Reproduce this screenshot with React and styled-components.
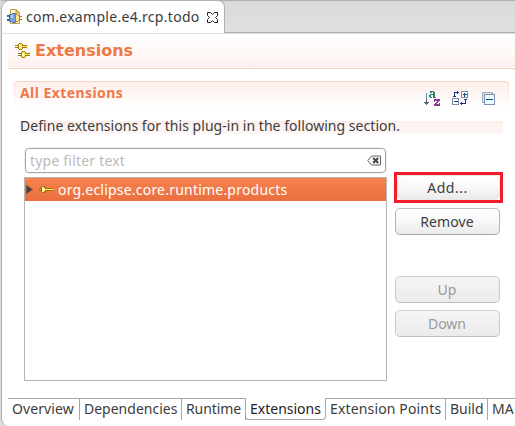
import React from "react";
import styled, { createGlobalStyle, css } from "styled-components";

const Global = createGlobalStyle`
  *{box-sizing:border-box}
  body{margin:0;overflow:hidden;background:#dcdcdc;font-family:"Noto Sans","Open Sans",sans-serif;font-size:14px;color:#3c3c3c}
  svg{display:block;flex:none}
`;

const Window = styled.div`
  width:515px;height:426px;overflow:hidden;display:flex;flex-direction:column;
  padding-left:1px;background:#dcdcdc;
`;
const TabStrip = styled.header`
  height:33px;flex:none;display:flex;border-top:1px solid #b0b0b0;
  border-bottom:1px solid #b0b0b0;background:linear-gradient(#d9d9d9,#e0e0e0);
`;
const FileTab = styled.div`
  width:224px;height:33px;margin-top:-1px;padding:0 6px 0 5px;display:flex;align-items:center;
  background:#fff;border:solid #b0b0b0;border-width:1px 1px 0 1px;border-radius:9px 7px 0 0;
`;
const Label = styled.span`
  display:block;white-space:pre;line-height:20px;
  letter-spacing:${p => p.$track || 0}px;
`;
const FileName = styled(Label)`margin-left:3px;width:181px;`;
const Editor = styled.main`
  flex:1;display:flex;flex-direction:column;background:#fff;
  border-left:1px solid #b0b0b0;border-top:1px solid #e0e0e0;border-radius:0 0 0 8px;
  padding-left:6px;
`;
const FormHead = styled.div`
  height:35px;flex:none;display:flex;align-items:center;padding:0 0 1px 7px;
  background:linear-gradient(#fff,#fef8f6 60%,#fdefeb) 0 0/100% 33px no-repeat;
  border-bottom:1px solid #f8cfbc;
`;
const FormTitle = styled.h1`
  margin:0 0 0 5px;font:bold 16px/20px "DejaVu Sans",sans-serif;color:#f07746;
`;
const Section = styled.section`margin:12px 6px 0 6px;height:314px;flex:none;`;
const SectionHead = styled.div`
  height:26px;display:flex;justify-content:space-between;padding:1px 13px 0 6px;
  border-top:1px solid #f9d3c6;border-radius:4px 4px 0 0;
  background:linear-gradient(#fbd9cf,#fff) 0 0/1px 100% no-repeat,
    linear-gradient(#fbd9cf,#fff) 100% 0/1px 100% no-repeat,
    linear-gradient(#fdefeb,#fff);
`;
const SectionTitle = styled(Label)`font-weight:bold;color:#f07746;`;
const Tools = styled.div`display:flex;gap:11px;padding-top:8px;`;
const Description = styled.p`
  margin:14px 6px 0;height:13px;padding-bottom:3px;background:linear-gradient(#fdf0ec,#fef7f5);
  display:flex;align-items:center;
`;
const Body = styled.div`display:flex;margin:14px 0 0 10px;gap:7px;`;
const ListColumn = styled.div`width:363px;`;
const Filter = styled.div`
  height:25px;border:1px solid #aaa49e;border-radius:4px;box-shadow:0 0 0 1px #f1f0ef;
  margin:0 1px;padding:0 3px 0 4px;display:flex;align-items:center;justify-content:space-between;color:#bcb9b6;
`;
const List = styled.div`
  margin-top:4px;height:204px;border:1px solid #bab5b0;
`;
const Row = styled.div`
  height:23px;display:flex;align-items:center;color:#fff;
  background:linear-gradient(#f5824f,#ea6f3e);padding:0 0 0 1px;
`;
const RowLabel = styled(Label)`margin-left:4px;`;
const RowArrow = styled.svg`margin-right:6px;`;
const Buttons = styled.div`display:flex;flex-direction:column;width:109px;padding-top:24px;`;
const Button = styled.button`
  width:105px;height:27px;margin:${p => p.$top || 0}px 0 0 1px;padding:0 1px 0 0;
  border:1px solid #b3afab;border-color:#c3c0bd #b8b4b0 #aaa5a0;border-radius:5px;
  background:linear-gradient(#fff,#f9f9f9 45%,#ebebeb);font:inherit;color:#3c3c3c;
  letter-spacing:${p => p.$track || 0}px;
  display:flex;align-items:center;justify-content:center;
  ${p => p.disabled && css`color:#999;background:linear-gradient(#f6f5f5,#ecebeb);border-color:#d3d1ce #cbc8c5 #bfbbb7;`}
`;
const Highlight = styled.div`
  width:109px;height:31px;border:3px solid #f41c2b;display:flex;
  ${Button}{margin:0;padding-right:2px;width:103px;height:25px;border-color:#e8e6e4;}
`;
const PageTabs = styled.nav`display:flex;height:23px;margin-top:3px;overflow:hidden;`;
const PageTab = styled.div`
  flex:none;width:${p => p.$w}px;height:22px;padding:0 0 0 ${p => p.$pad || 4}px;
  border-top:1px solid #aaa59f;border-right:1px solid #aaa59f;
  ${p => p.$active && css`
    border-top-color:transparent;border-bottom:1px solid #aaa59f;border-left:1px solid #aaa59f;
    border-radius:0 0 4px 4px;margin-left:-1px;color:#222;
  `}
`;

const Plug = ({ x = 0, y = 0 }) => (
  <g transform={`translate(${x} ${y})`} shapeRendering="crispEdges">
    <path d="M0 2h3v1H0zM0 4h3v1H0zM7 2h5v3H7z" fill="#9c7b08" />
    <path d="M3 1h1V0h3v1h1v5H7v1H4V6H3z" fill="#a27c00" />
    <path d="M4 1h3v5H4zM7 3h5v1H7z" fill="#ffe95c" />
    <path d="M4 2h2v3H4z" fill="#fffbd0" />
  </g>
);
const RowPlug = () => (
  <svg width="15" height="7" viewBox="0 0 15 7" shapeRendering="crispEdges">
    <path d="M0 2h3v1H0zM0 4h3v1H0zM7 2h8v3H7z" fill="#a86f00" />
    <path d="M2 1h1V0h3v1h1v5H6v1H3V6H2z" fill="#a27600" />
    <path d="M3 1h2v5H3zM6 3h9v1H6z" fill="#fff06a" />
    <path d="M4 2h2v3H4z" fill="#fffbd0" />
  </svg>
);
const FileIcon = () => (
  <svg width="16" height="16" viewBox="0 0 16 16">
    <path d="M3.5.5h6l3 3v11h-9z" fill="#fff6d8" stroke="#c69b45" />
    <path d="M9 .5V4h3.5" fill="#e5bd61" stroke="#c69b45" />
    <path d="M0 6h3v2H0zm0 4h3v2H0z" fill="#3765aa" />
    <path d="M2.5 5.5h2l1-1h3v9h-3l-1-1h-2z" fill="#7ba2d8" stroke="#3f69ad" />
    <path d="M4 6h2v3H4z" fill="#b5cdec" />
    <path d="M8.5 5.5h2l2 2v3l-2 2h-2z" fill="#ffe58e" stroke="#a87919" />
    <path d="M12.5 7.5H15m-2.5 3H15" stroke="#a87919" />
  </svg>
);
const CloseIcon = () => (
  <svg width="11" height="11" viewBox="0 0 11 11">
    <path d="M.5.5h3l2 2 2-2h3v3l-2 2 2 2v3h-3l-2-2-2 2h-3v-3l2-2-2-2z" fill="#fff" stroke="#222" />
  </svg>
);
const SortIcon = () => (
  <svg width="16" height="16" viewBox="0 0 16 16" shapeRendering="crispEdges">
    <path d="M2 2h1v6H2z" fill="#6394a8" />
    <path d="M2 8h1v3H2zM0 11h5v1H0zM1 12h3v1H1zM2 13h1v1H2z" fill="#5d6175" />
    <path d="M6 0h4v1h1v5h1v1H9V6H8v1H6V6H5V4h1V3h3V1H8v1H6zM7 4v2h2V4z" fillRule="evenodd" fill="#278878" />
    <path d="M10 8h6v2h-1v1h-1v1h-1v1h2v-1h1v3h-6v-2h1v-1h1v-1h1v-1h-2v1h-1z" fill="#8b3b91" />
  </svg>
);
const ExpandIcon = () => (
  <svg width="20" height="16" viewBox="0 0 20 16" shapeRendering="crispEdges">
    <path d="M10.5 .5h6v6h-6zM1.5 7.5h6v6h-6z" fill="#fff" stroke="#7d8daa" />
    <path d="M12 3h4v1h-4zM13 2h1v4h-1zM3 10h4v1H3z" fill="#064b84" />
    <path d="M3 1h3V0h1v1h1v1H7v1H6V2H4v3h1v1H2V5h1z" fill="#17338e" />
    <path d="M14 8h2v1h-1v4h-4v1h-1v-1H9v-1h1v-1h1v1h3V9h-1V8z" fill="#17338e" />
  </svg>
);
const CollapseIcon = () => (
  <svg width="14" height="15" viewBox="0 0 14 15" shapeRendering="crispEdges">
    <path d="M.5 1.5h10v10H.5z" fill="#d4ebf2" stroke="#9dafbf" />
    <path d="M2.5 3.5h10v10h-10z" fill="#effaff" stroke="#7d8daa" />
    <path d="M4 8h7v1H4z" fill="#064b84" />
  </svg>
);
const ClearIcon = () => (
  <svg width="15" height="11" viewBox="0 0 15 11">
    <path d="M4.5 1h9v9h-9L.8 5.5z" fill="#fff" stroke="#666" />
    <path d="M6.2 3l5 5M11.2 3L6.2 8" stroke="#444" strokeWidth="2" />
  </svg>
);

const pages = [
  { name: "Overview", w: 72, track: 0.1 },
  { name: "Dependencies", w: 102 },
  { name: "Runtime", w: 64, track: -0.1 },
  { name: "Extensions", w: 81, active: true },
  { name: "Extension Points", w: 120, track: 0.15 },
  { name: "Build", w: 42 },
  { name: "MA", w: 40 },
];

export default function App() {
  return (
    <Window>
      <Global />
      <TabStrip>
        <FileTab>
          <FileIcon />
          <FileName $track={0.3}>com.example.e4.rcp.todo</FileName>
          <CloseIcon />
        </FileTab>
      </TabStrip>
      <Editor>
        <FormHead>
          <svg width="15" height="15" viewBox="0 0 15 15"><Plug /><Plug x={3} y={8} /></svg>
          <FormTitle>Extensions</FormTitle>
        </FormHead>
        <Section>
          <SectionHead>
            <SectionTitle $track={0.43}>All Extensions</SectionTitle>
            <Tools><SortIcon /><ExpandIcon /><CollapseIcon /></Tools>
          </SectionHead>
          <Description><Label $track={0.04}>Define extensions for this plug-in in the following section.</Label></Description>
          <Body>
            <ListColumn>
              <Filter><Label $track={0.2}>type filter text</Label><ClearIcon /></Filter>
              <List>
                <Row>
                  <RowArrow width="7" height="9" viewBox="0 0 7 9"><path d="M.5.5l6 4-6 4z" fill="#444" stroke="#6b4a3b" strokeWidth=".6" /></RowArrow>
                  <RowPlug />
                  <RowLabel $track={0.21}>org.eclipse.core.runtime.products</RowLabel>
                </Row>
              </List>
            </ListColumn>
            <Buttons>
              <Highlight><Button $track={0.5}>Add...</Button></Highlight>
              <Button $top={5} $track={0.1}>Remove</Button>
              <Button $top={41} disabled>Up</Button>
              <Button $top={7} disabled>Down</Button>
            </Buttons>
          </Body>
        </Section>
        <PageTabs>
          {pages.map(p => (
            <PageTab key={p.name} $w={p.w} $pad={p.pad} $active={p.active}><Label $track={p.track}>{p.name}</Label></PageTab>
          ))}
        </PageTabs>
      </Editor>
    </Window>
  );
}
